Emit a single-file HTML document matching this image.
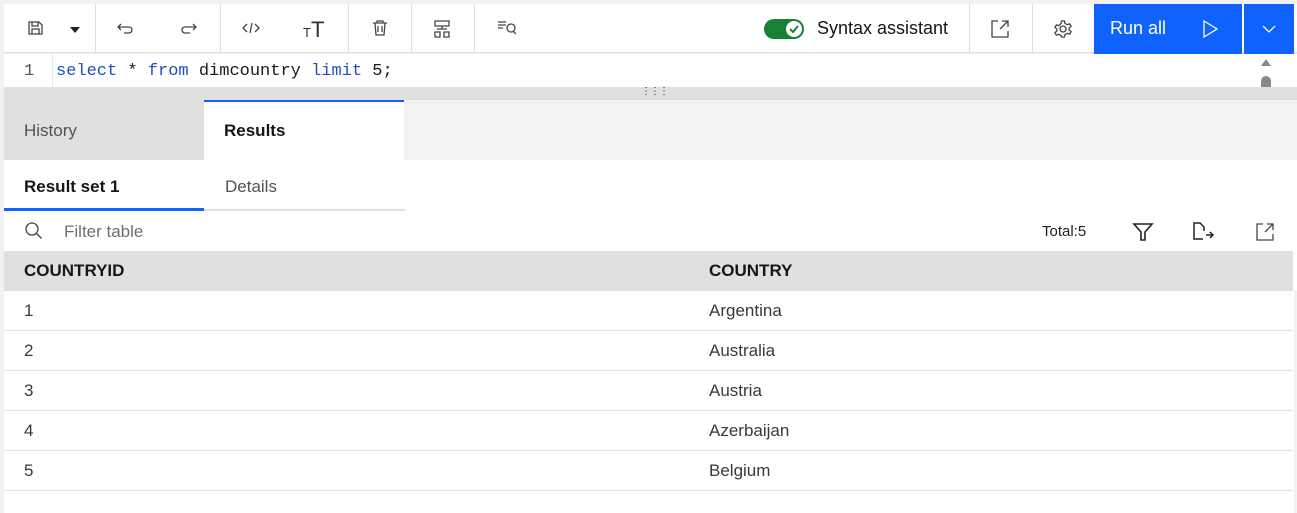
<!DOCTYPE html><html><head><style>
*{box-sizing:border-box;margin:0;padding:0}
body{width:1297px;height:513px;overflow:hidden;background:#f2f2f2;font-family:"Liberation Sans",sans-serif;position:relative;color:#161616}
.a{position:absolute}
.tb{left:4px;top:4px;width:1293px;height:49px;background:#fff;border-bottom:1px solid #e0e0e0}
.dv{top:4px;width:1px;height:49px;background:#e0e0e0}
.ic{top:19px}
svg{fill:none;stroke:#444;stroke-width:1.3}
.row{left:4px;width:1289px;height:40px;background:#fff;border-bottom:1px solid #e0e0e0;font-size:17px;color:#393939}
.row span{position:absolute;top:10px}
</style></head><body>
<div class="a tb"></div>
<div class="a dv" style="left:95px"></div><div class="a dv" style="left:220px"></div><div class="a dv" style="left:348px"></div><div class="a dv" style="left:411px"></div><div class="a dv" style="left:474px"></div><div class="a dv" style="left:969px"></div><div class="a dv" style="left:1032px"></div>
<svg class="a ic" style="left:26px" width="18" height="18"><path d="M3 3h10l3 3v9H3z M6 3v4h6V3 M6 15v-5h7v5"/></svg>
<div class="a" style="left:70px;top:27px;width:0;height:0;border-left:5px solid transparent;border-right:5px solid transparent;border-top:6px solid #222"></div>
<svg class="a ic" style="left:116px" width="20" height="18"><path d="M5 5L2 8l3 3M2 8h11a3 3 0 010 6H8"/></svg>
<svg class="a ic" style="left:178px" width="20" height="18"><path d="M15 5l3 3-3 3M18 8H7a3 3 0 000 6h5"/></svg>
<svg class="a ic" style="left:241px" width="20" height="18"><path d="M6 5L2 9l4 4M14 5l4 4-4 4M11 4l-2 10"/></svg>
<div class="a" style="left:303px;top:17px;font-size:22px;color:#333"><span style="font-size:13px">T</span>T</div>
<svg class="a ic" style="left:371px" width="18" height="18"><path d="M2 4h14M6 4V2h6v2M4 4l1 12h8l1-12M7 7v6M11 7v6"/></svg>
<svg class="a ic" style="left:432px" width="20" height="20"><path d="M3 2h14v5H3zM10 7v3M5 10h10M3 13h5v5H3zM12 13h5v5h-5z"/></svg>
<svg class="a ic" style="left:496px" width="20" height="20"><path d="M2 3h8M2 6h8M2 9h5M11 9a4 4 0 108 0a4 4 0 10-8 0M17 12l3 3"/></svg>
<div class="a" style="left:764px;top:19px;width:40px;height:20px;border-radius:10px;background:#198038"></div>
<div class="a" style="left:786px;top:21px;width:16px;height:16px;border-radius:8px;background:#fff"></div>
<svg class="a" style="left:788px;top:23px;stroke:#198038;stroke-width:2" width="12" height="12"><path d="M2 6l3 3 5-6"/></svg>
<div class="a" style="left:817px;top:18px;font-size:18px">Syntax assistant</div>
<svg class="a ic" style="left:990px;top:19px" width="20" height="20"><path d="M8 2H2v16h16v-6M12 2h6v6M18 2l-8 8"/></svg>
<svg class="a ic" style="left:1053px;top:19px" width="20" height="20"><circle cx="10" cy="10" r="3"/><path d="M8.5 2h3l.5 2.5 2.2 1.2 2.4-.9 1.5 2.6-2 1.6v2l2 1.6-1.5 2.6-2.4-.9-2.2 1.2-.5 2.5h-3L8 16.5 5.8 15.3l-2.4.9L1.9 13.6l2-1.6v-2l-2-1.6 1.5-2.6 2.4.9L8 4.5z"/></svg>
<div class="a" style="left:1094px;top:4px;width:148px;height:50px;background:#0f62fe"></div>
<div class="a" style="left:1244px;top:4px;width:50px;height:50px;background:#0f62fe"></div>
<div class="a" style="left:1110px;top:18px;font-size:18px;color:#fff">Run all</div>
<svg class="a" style="left:1202px;top:20px;stroke:#fff" width="16" height="18"><path d="M2 1l13 8-13 8z"/></svg>
<svg class="a" style="left:1261px;top:24px;stroke:#fff" width="16" height="10"><path d="M2 2l6 6 6-6"/></svg>
<div class="a" style="left:4px;top:54px;width:1293px;height:33px;background:#fff"></div>
<div class="a" style="left:52px;top:54px;width:1px;height:33px;background:#e8e8e8"></div>
<div class="a" style="left:24px;top:62px;font-family:'Liberation Mono',monospace;font-size:17px;color:#555">1</div>
<div class="a" style="left:56px;top:62px;font-family:'Liberation Mono',monospace;font-size:17px;color:#1a1a1a;white-space:pre"><span style="color:#1f4fc0">select</span> * <span style="color:#1f4fc0">from</span> dimcountry <span style="color:#1f4fc0">limit</span> 5;</div>
<div class="a" style="left:1261px;top:59px;width:0;height:0;border-left:5px solid transparent;border-right:5px solid transparent;border-bottom:7px solid #888"></div>
<div class="a" style="left:1261px;top:76px;width:10px;height:11px;border-radius:5px 5px 0 0;background:#888"></div>
<div class="a" style="left:4px;top:87px;width:1293px;height:13px;background:#e0e0e0"></div>
<div class="a" style="left:641px;top:89px;font-size:10px;letter-spacing:-1px;color:#222;line-height:5px">&#8942;&#8942;&#8942;</div>
<div class="a" style="left:4px;top:100px;width:200px;height:60px;background:#e0e0e0"></div>
<div class="a" style="left:204px;top:100px;width:200px;height:60px;background:#fff;border-top:2px solid #0f62fe"></div>
<div class="a" style="left:24px;top:121px;font-size:17px;color:#525252">History</div>
<div class="a" style="left:224px;top:121px;font-size:17px;font-weight:bold">Results</div>
<div class="a" style="left:4px;top:160px;width:1293px;height:353px;background:#fff"></div>
<div class="a" style="left:24px;top:177px;font-size:17px;font-weight:bold">Result set 1</div>
<div class="a" style="left:225px;top:177px;font-size:17px;color:#525252">Details</div>
<div class="a" style="left:4px;top:208px;width:200px;height:3px;background:#0f62fe"></div>
<div class="a" style="left:204px;top:209px;width:201px;height:2px;background:#e0e0e0"></div>
<svg class="a" style="left:24px;top:221px" width="20" height="20"><circle cx="8" cy="8" r="6"/><path d="M12.5 12.5l5 5"/></svg>
<div class="a" style="left:64px;top:222px;font-size:17px;color:#6f6f6f">Filter table</div>
<div class="a" style="left:1042px;top:223px;font-size:15px;color:#222">Total:5</div>
<svg class="a" style="left:1132px;top:221px;stroke:#222;stroke-width:1.6" width="22" height="22"><path d="M2 3h18l-7 8v8h-4v-8z"/></svg>
<svg class="a" style="left:1192px;top:221px;stroke:#222;stroke-width:1.5" width="22" height="22"><path d="M11 18H2V2h6l4 4v4M14 14h7M18 11l3 3-3 3"/></svg>
<svg class="a" style="left:1255px;top:222px" width="20" height="20"><path d="M8 2H2v16h16v-6M12 2h6v6M18 2l-8 8"/></svg>
<div class="a" style="left:4px;top:251px;width:1289px;height:40px;background:#e0e0e0;font-weight:bold;font-size:17px"><span class="a" style="left:20px;top:10px">COUNTRYID</span><span class="a" style="left:705px;top:10px">COUNTRY</span></div>
<div class="a row" style="top:291px"><span style="left:20px">1</span><span style="left:705px">Argentina</span></div>
<div class="a row" style="top:331px"><span style="left:20px">2</span><span style="left:705px">Australia</span></div>
<div class="a row" style="top:371px"><span style="left:20px">3</span><span style="left:705px">Austria</span></div>
<div class="a row" style="top:411px"><span style="left:20px">4</span><span style="left:705px">Azerbaijan</span></div>
<div class="a row" style="top:451px"><span style="left:20px">5</span><span style="left:705px">Belgium</span></div>
<div class="a" style="left:1294px;top:291px;width:3px;height:222px;background:#f2f2f2"></div>
</body></html>
